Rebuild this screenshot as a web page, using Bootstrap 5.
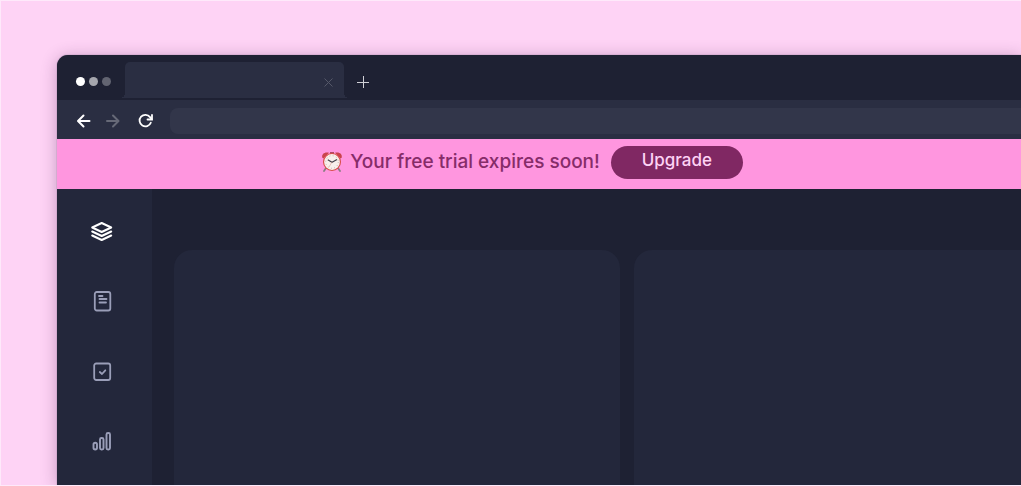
<!DOCTYPE html>
<html lang="en">
<head>
<meta charset="utf-8">
<meta name="viewport" content="width=device-width, initial-scale=1">
<title>Free trial</title>
<link href="https://cdn.jsdelivr.net/npm/bootstrap@5.3.0/dist/css/bootstrap.min.css" rel="stylesheet">
<style>
body { background: #fed3f5; font-family: Inter, "Open Sans", sans-serif; }
.stage { padding: 54px 0 0 56px; border: 1px solid #fee9fa; border-right: 0; overflow: hidden; }
.browser { background: #1e2133; border-radius: 11px 0 0 0; box-shadow: 0 0 1px #5a4b6a, 0 2px 16px rgba(70, 30, 80, .32); overflow: hidden; }
.titlebar { height: 45px; padding: 7px 0 2px 19px; }
.dots { gap: 4px; margin-right: 14px; padding-top: 2px; }
.dot { width: 9px; height: 9px; border-radius: 50%; background: #fff; }
.dot-mid { background: #a5a6ad; }
.dot-dim { background: #626471; }
.tab { position: relative; width: 219px; height: 36px; padding: 4px 10px 0 0; background: #2a2e42; border-radius: 5px 5px 0 0; }
.tab::before, .tab::after { content: ""; position: absolute; bottom: 0; width: 5px; height: 5px; }
.tab::before { right: 100%; background: radial-gradient(circle at 0 0, transparent 5px, #2a2e42 5px); }
.tab::after { left: 100%; background: radial-gradient(circle at 100% 0, transparent 5px, #2a2e42 5px); }
.plain { padding: 0; border: 0; background: none; line-height: 0; }
.new-tab { margin: 4px 0 0 12px; }
.toolbar { height: 39px; padding: 2px 0 0 18px; background: #2a2e42; }
.toolbar .plain { margin-right: 12px; }
.toolbar .reload { margin: 0 16px 0 4px; }
.address { height: 26px; border: 0; border-radius: 8px 0 0 8px; background: #32364a; color: #fff; padding: 0 12px; outline: 0; min-width: 0; }
.banner { height: 50px; padding: 0 14px 4px 0; background: #ff96df; color: #862c69; font-size: 19px; line-height: 28px; font-weight: 500; }
.clock { margin-right: 7px; }
.upgrade { width: 132px; height: 33px; margin-left: 11px; padding: 0 0 2px; border: 0; border-radius: 17px; background: #802863; color: #fed3f5; font-size: 17px; font-weight: 500; }
.upgrade:hover { background: #6b1f52; color: #fed3f5; }
.sidebar { width: 95px; padding: 30px 5px 0 0; gap: 46px; background: #23273b; color: #9a9eb8; }
.sidebar a { color: inherit; line-height: 0; }
.sidebar a.active { color: #fff; }
.panels { display: grid; grid-template-columns: 446fr 387fr; gap: 14px; padding: 61px 0 0 22px; }
.panel { background: #23273b; border-radius: 18px 18px 0 0; }
.panel:last-child { border-radius: 18px 0 0 0; }
</style>
</head>
<body>
<div class="stage vh-100 d-flex flex-column">
  <div class="browser flex-grow-1 d-flex flex-column">
    <div class="titlebar d-flex align-items-center">
      <div class="dots d-flex"><span class="dot"></span><span class="dot dot-mid"></span><span class="dot dot-dim"></span></div>
      <div class="tab d-flex align-items-center justify-content-end">
        <button class="plain" type="button" aria-label="Close tab"><svg width="11" height="11" viewBox="0 0 11 11" stroke="#555869"><path d="M1.500 1.500l8 8M9.500 1.500l-8 8"/></svg></button>
      </div>
      <button class="plain new-tab" type="button" aria-label="New tab"><svg width="14" height="14" viewBox="0 0 14 14" stroke="#d0d0d6"><path d="M1 7.500h12M7.500 1v12"/></svg></button>
    </div>
    <div class="toolbar d-flex align-items-center">
      <button class="plain" type="button" aria-label="Back"><svg width="17" height="17" viewBox="0 0 17 17" fill="none" stroke="#fff" stroke-width="2" stroke-linecap="round" stroke-linejoin="round"><path d="M14.500 9H3.500M8.500 3.500L3 9l5.500 5.500"/></svg></button>
      <button class="plain" type="button" aria-label="Forward"><svg width="17" height="17" viewBox="0 0 17 17" fill="none" stroke="#666977" stroke-width="2" stroke-linecap="round" stroke-linejoin="round"><path d="M3 9H14M9 3.500l5.500 5.500L9 14.500"/></svg></button>
      <button class="plain reload" type="button" aria-label="Reload"><svg width="17" height="17" viewBox="0 0 17 17" fill="none" stroke="#fff" stroke-width="1.800" stroke-linecap="round"><path d="M13.800 10.700A5.800 5.800 0 1 1 13 5.100L14.500 7"/><path d="M15 3v4.500h-4.500"/></svg></button>
      <input class="address flex-grow-1" type="text" aria-label="Address">
    </div>
    <div class="banner d-flex align-items-center justify-content-center">
      <svg class="clock" width="22" height="22" viewBox="0 0 22 22" aria-hidden="true">
        <path d="M5 17l-2 3M17 17l2 3" stroke="#897e82" stroke-width="1.800" stroke-linecap="round"/>
        <path d="M1.300 6.700C.5 3 3.500.700 8 1.800L2.500 7.500zM20.700 6.700C21.500 3 18.500.700 14 1.800l5.500 5.700z" fill="#c9434c"/>
        <path d="M9 2h4" stroke="#96303c" stroke-width="1.500"/>
        <circle cx="11" cy="11" r="9" fill="#d84c46"/>
        <circle cx="11" cy="11" r="7.900" fill="#f8efeb"/>
        <circle cx="11" cy="11" r="6.300" fill="none" stroke="#baa9a7" stroke-width="1" stroke-dasharray=".8 2.500"/>
        <path d="M6.800 8.800L11 11.300l5-2.800" fill="none" stroke="#44414a" stroke-width="1.100"/><path d="M11 11l-3 5" stroke="#d98e85" stroke-width=".5"/>
      </svg>
      <span class="text-nowrap">Your free trial expires soon!</span>
      <button class="upgrade btn" type="button">Upgrade</button>
    </div>
    <div class="d-flex flex-grow-1">
      <nav class="sidebar d-flex flex-column align-items-center" aria-label="Main">
        <a class="active" href="#" aria-label="Projects"><svg width="24" height="24" viewBox="0 0 24 24" fill="none" stroke="currentColor" stroke-width="2" stroke-linejoin="round" stroke-linecap="round"><path d="M11.700 4l9.500 4.500-9.500 4.500-9.500-4.500z"/><path d="M2.200 12.500l9.500 4.500 9.500-4.500M2.200 16.500l9.500 4.500 9.500-4.500"/></svg></a>
        <a href="#" aria-label="Notes"><svg width="24" height="24" viewBox="0 0 24 24" fill="none" stroke="currentColor" stroke-width="1.800" stroke-linecap="round"><rect x="4.800" y="3" width="15.500" height="18.500" rx="2"/><path d="M9 7h3.500M9.500 10h7M9.500 13.500h6.500"/></svg></a>
        <a href="#" aria-label="Tasks"><svg width="24" height="24" viewBox="0 0 24 24" fill="none" stroke="currentColor" stroke-width="1.800" stroke-linecap="round" stroke-linejoin="round"><rect x="4.200" y="4.500" width="16" height="16.500" rx="2"/><path d="M9.800 13l2.200 2 3.300-3.700"/></svg></a>
        <a href="#" aria-label="Reports"><svg width="24" height="24" viewBox="0 0 24 24" fill="none" stroke="currentColor" stroke-width="1.900"><rect x="3.500" y="13.800" width="3.500" height="6.700" rx="1.750"/><rect x="10" y="9" width="3.500" height="11.500" rx="1.500"/><rect x="16.500" y="4" width="3.500" height="16.500" rx="1.500"/></svg></a>
      </nav>
      <main class="panels flex-grow-1">
        <section class="panel" aria-label="Overview"></section>
        <section class="panel" aria-label="Details"></section>
      </main>
    </div>
  </div>
</div>
<script src="https://cdn.jsdelivr.net/npm/bootstrap@5.3.0/dist/js/bootstrap.bundle.min.js"></script>
</body>
</html>
